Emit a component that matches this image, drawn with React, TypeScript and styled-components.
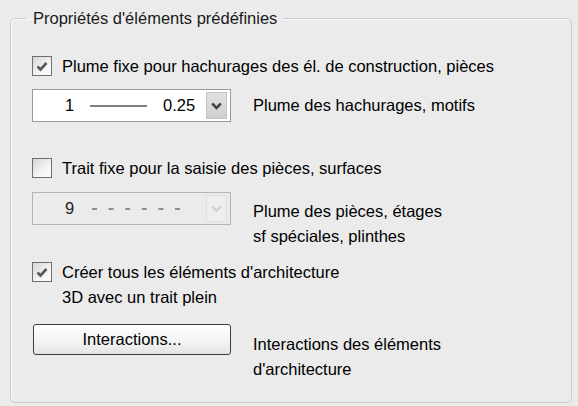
import React from 'react';
import styled, { createGlobalStyle } from 'styled-components';

const GlobalStyle = createGlobalStyle`
  html, body {
    margin: 0;
    padding: 0;
    background: #ebebeb;
  }
  body {
    font-family: "Liberation Sans", Arial, sans-serif;
    font-size: 16.5px;
    color: #000;
  }
`;

const Page = styled.div`
  width: 578px;
  height: 406px;
  overflow: hidden;
  padding: 0 6px 0 10px;
  box-sizing: border-box;
`;

const Group = styled.fieldset`
  margin: 9px 0 0 0;
  padding: 0 0 0 15px;
  border: 1px solid #cdcdcd;
  border-radius: 5px;
  box-shadow: inset 1px 1px 0 #f8f8f8;
  height: 394px;
  box-sizing: border-box;
`;

const Legend = styled.legend`
  padding: 0 6px 0 7px;
  line-height: 18px;
  color: #1a1a1a;
`;

const Content = styled.div`
  display: flex;
  flex-direction: column;
  padding-left: 6px;
`;

const Row = styled.div<{ $top: number; $align?: string }>`
  display: flex;
  align-items: ${(p) => p.$align || 'center'};
  margin-top: ${(p) => p.$top}px;
`;

const CheckLabel = styled.label`
  display: flex;
  align-items: flex-start;
  gap: 10px;
  line-height: 25px;
`;

const Box = styled.span`
  flex: none;
  width: 18px;
  height: 18px;
  margin-top: 2px;
  border: 1px solid #6f6f6f;
  background: linear-gradient(135deg, #d6d6d6 0%, #f4f4f4 60%, #ffffff 100%);
  display: flex;
  align-items: center;
  justify-content: center;
`;

const Combo = styled.div<{ $disabled?: boolean }>`
  flex: none;
  width: 199px;
  height: 33px;
  box-sizing: border-box;
  border: 1px solid ${(p) => (p.$disabled ? '#b4b4b4' : '#9a9a9a')};
  background: ${(p) => (p.$disabled ? '#ebebeb' : '#fff')};
  display: flex;
  align-items: center;
  padding: 0 3px 0 32px;
  color: ${(p) => (p.$disabled ? '#222' : '#000')};
`;

const Value = styled.span`
  width: 25px;
`;

const Pen = styled.svg`
  flex: none;
`;

const Weight = styled.span`
  margin-left: 16px;
  flex: 1;
`;

const Arrow = styled.div<{ $disabled?: boolean }>`
  margin-left: auto;
  width: 21px;
  height: 27px;
  box-sizing: border-box;
  border: 1px solid ${(p) => (p.$disabled ? '#dedede' : '#c4c4c4')};
  background: ${(p) =>
    p.$disabled ? '#eeeeee' : 'linear-gradient(180deg, #e2e2e2 0%, #cfcfcf 100%)'};
  display: flex;
  align-items: center;
  justify-content: center;
`;

const SideLabel = styled.div<{ $pad?: number }>`
  margin-left: 22px;
  line-height: 25px;
  padding-top: ${(p) => p.$pad || 0}px;
`;

const Button = styled.button`
  flex: none;
  width: 198px;
  height: 31px;
  margin-left: 1px;
  border: 1px solid #3e3e3e;
  border-radius: 3px;
  background: linear-gradient(180deg, #ffffff 0%, #f4f4f4 55%, #e4e4e4 100%);
  font-family: inherit;
  font-size: 16.5px;
  color: #000;
  padding: 0;
`;

const Check = () => (
  <svg width="12" height="11" viewBox="0 0 12 11">
    <path d="M1.5 5.5 L4.5 8.5 L10.5 2" fill="none" stroke="#5a5a5a" strokeWidth="2.6" />
  </svg>
);

const Chevron = ({ color }: { color: string }) => (
  <svg width="11" height="8" viewBox="0 0 11 8">
    <path d="M1.2 1.5 L5.5 5.8 L9.8 1.5" fill="none" stroke={color} strokeWidth="2.6" />
  </svg>
);

export default function App() {
  return (
    <Page>
      <GlobalStyle />
      <Group>
        <Legend>Propriétés d'éléments prédéfinies</Legend>
        <Content>
          <Row $top={27}>
            <CheckLabel>
              <Box><Check /></Box>
              <span>Plume fixe pour hachurages des él. de construction, pièces</span>
            </CheckLabel>
          </Row>

          <Row $top={10}>
            <Combo>
              <Value>1</Value>
              <Pen width="57" height="4">
                <line x1="0" y1="2" x2="57" y2="2" stroke="#000" strokeWidth="1.2" />
              </Pen>
              <Weight>0.25</Weight>
              <Arrow><Chevron color="#444" /></Arrow>
            </Combo>
            <SideLabel>Plume des hachurages, motifs</SideLabel>
          </Row>

          <Row $top={34}>
            <CheckLabel>
              <Box />
              <span>Trait fixe pour la saisie des pièces, surfaces</span>
            </CheckLabel>
          </Row>

          <Row $top={11} $align="flex-start">
            <Combo $disabled>
              <Value>9</Value>
              <Pen width="92" height="4">
                <line x1="2" y1="2" x2="92" y2="2" stroke="#333" strokeWidth="1.2" strokeDasharray="5 11.6" />
              </Pen>
              <Arrow $disabled><Chevron color="#d4d4d4" /></Arrow>
            </Combo>
            <SideLabel $pad={7}>
              Plume des pièces, étages
              <br />
              sf spéciales, plinthes
            </SideLabel>
          </Row>

          <Row $top={11}>
            <CheckLabel>
              <Box><Check /></Box>
              <span>
                Créer tous les éléments d'architecture
                <br />
                3D avec un trait plein
              </span>
            </CheckLabel>
          </Row>

          <Row $top={14} $align="flex-start">
            <Button>Interactions...</Button>
            <SideLabel $pad={8}>
              Interactions des éléments
              <br />
              d'architecture
            </SideLabel>
          </Row>
        </Content>
      </Group>
    </Page>
  );
}
